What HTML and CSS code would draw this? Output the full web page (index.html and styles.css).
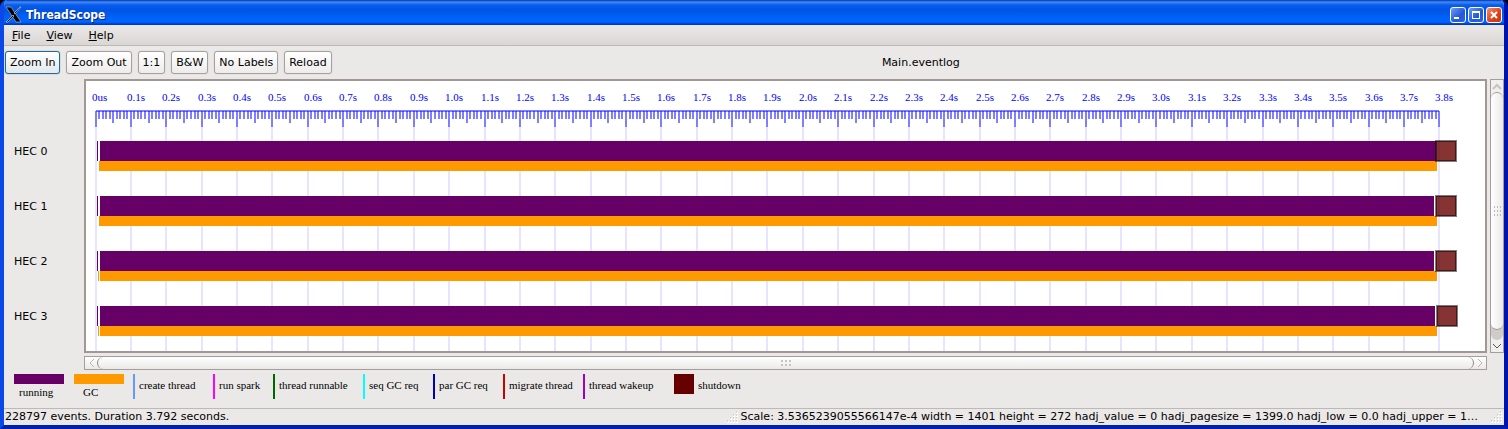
FILE: index.html
```html
<!DOCTYPE html>
<html lang="en">
<head>
<meta charset="utf-8">
<title>ThreadScope</title>
<link rel="stylesheet" href="styles.css">
</head>
<body>
<div class="window">
  <header class="titlebar">
    <svg class="logo" width="18" height="18" viewBox="0 0 18 18" aria-hidden="true">
      <path d="M1 1h5l10 15h-5z" fill="#000" stroke="#9db4cc" stroke-width=".7"/>
      <path d="M15 1h1L10 8 9 7zM8 9l1 1-6 6H1z" fill="#000" stroke="#b8c8d8" stroke-width=".7"/>
    </svg>
    <h1 class="title">ThreadScope</h1>
    <div class="controls">
      <button class="control" aria-label="Minimize"><svg width="14" height="14"><path d="M3 9h5v2H3z" fill="#fff"/></svg></button>
      <button class="control" aria-label="Maximize"><svg width="14" height="14"><path d="M3 3h8v8H3zM4 5v5h6V5z" fill="#fff" fill-rule="evenodd"/></svg></button>
      <button class="control control-close" aria-label="Close"><svg width="14" height="14"><path d="M4 4l6 6M10 4l-6 6" stroke="#fff" stroke-width="2"/></svg></button>
    </div>
  </header>

  <nav class="menubar">
    <button class="menu"><u>F</u>ile</button>
    <button class="menu"><u>V</u>iew</button>
    <button class="menu"><u>H</u>elp</button>
  </nav>

  <div class="toolbar">
    <button class="tool tool-focus">Zoom In</button>
    <button class="tool">Zoom Out</button>
    <button class="tool">1:1</button>
    <button class="tool">B&amp;W</button>
    <button class="tool">No Labels</button>
    <button class="tool">Reload</button>
    <span class="filename">Main.eventlog</span>
  </div>

  <main class="workspace">
    <div class="hecs">
      <span class="hec">HEC 0</span>
      <span class="hec">HEC 1</span>
      <span class="hec">HEC 2</span>
      <span class="hec">HEC 3</span>
    </div>
    <div class="viewport"><svg class="chart" id="chart" role="img" aria-label="Thread activity timeline"></svg></div>
    <div class="vscroll">
      <svg class="arrow" width="12" height="12"><path d="M2 9l4-4 4 4" fill="none" stroke="#c8c3bf" stroke-width="2"/></svg>
      <div class="trough-v"><div class="thumb-v"><svg width="8" height="12"><path d="M1 2h1m2 0h1m2 0h1M1 6h1m2 0h1m2 0h1M1 10h1m2 0h1m2 0h1" stroke="#bcb8b4" stroke-width="2"/></svg></div></div>
      <svg class="arrow" width="12" height="12"><path d="M2 4l4 4 4-4" fill="none" stroke="#555"/></svg>
    </div>
    <div class="hscroll">
      <svg class="arrow" width="12" height="12"><path d="M9 2L5 6l4 4" fill="none" stroke="#bbb5b0"/></svg>
      <div class="thumb-h"><svg width="12" height="8"><path d="M1 2h2m2 0h2m2 0h2M1 6h2m2 0h2m2 0h2" stroke="#c8c4c0" stroke-width="2"/></svg></div>
      <svg class="arrow" width="12" height="12"><path d="M4 2l4 4-4 4" fill="none" stroke="#bbb5b0"/></svg>
    </div>
  </main>

  <section class="legend">
    <div class="key key-block running"><i class="swatch"></i><span>running</span></div>
    <div class="key key-block gc"><i class="swatch"></i><span>GC</span></div>
    <div class="key create"><i class="mark"></i>create thread</div>
    <div class="key spark"><i class="mark"></i>run spark</div>
    <div class="key runnable"><i class="mark"></i>thread runnable</div>
    <div class="key seq"><i class="mark"></i>seq GC req</div>
    <div class="key par"><i class="mark"></i>par GC req</div>
    <div class="key migrate"><i class="mark"></i>migrate thread</div>
    <div class="key wakeup"><i class="mark"></i>thread wakeup</div>
    <div class="key shutdown"><i class="square"></i>shutdown</div>
  </section>

  <footer class="status">
    <span class="status-left">228797 events. Duration 3.792 seconds.</span>
    <svg class="grip" width="12" height="12"><path d="M9 2h2M6 5h2m1 0h2M3 8h2m1 0h2m1 0h2M0 11h2m1 0h2m1 0h2m1 0h2" stroke="#fff" stroke-width="2"/><path d="M9 1h1M6 4h1m2 0h1M3 7h1m2 0h1m2 0h1M0 10h1m2 0h1m2 0h1m2 0h1" stroke="#b5b0ac"/></svg>
    <span class="status-right">Scale: 3.5365239055566147e-4 width = 1401 height = 272 hadj_value = 0 hadj_pagesize = 1399.0 hadj_low = 0.0 hadj_upper = 1…</span>
    <svg class="grip" width="12" height="12"><path d="M9 2h2M6 5h2m1 0h2M3 8h2m1 0h2m1 0h2M0 11h2m1 0h2m1 0h2m1 0h2" stroke="#fff" stroke-width="2"/><path d="M9 1h1M6 4h1m2 0h1M3 7h1m2 0h1m2 0h1M0 10h1m2 0h1m2 0h1m2 0h1" stroke="#b5b0ac"/></svg>
  </footer>
</div>
<script src="chart.js"></script>
</body>
</html>
```
FILE: styles.css
```css
* { box-sizing: border-box; }
body { margin: 0; background: #000; }
button { font: inherit; color: inherit; margin: 0; }
.window {
  display: flex;
  flex-direction: column;
  min-height: 100vh;
  border: 4px solid;
  border-color: #0a48e8 #0012b0 #0020b0 #0a48e8;
  border-top: 0;
  border-radius: 7px 7px 0 0;
  background: #ebe9e8;
  color: #000;
  font: 11px/14px "DejaVu Sans", sans-serif;
  overflow: hidden;
}
.titlebar {
  display: flex;
  align-items: center;
  gap: 3px;
  height: 25px;
  margin: 0 -4px;
  padding: 4px 6px 0 5px;
  background: linear-gradient(#0831a8 0, #3c8cf8 2px, #0a5cec 5px, #0054e3 10px, #0062fa 18px, #0066ff 22px, #003dd0 24px, #0036b8 25px);
}
.title {
  flex: 1;
  margin: 0;
  color: #fff;
  font: bold 12px/16px "DejaVu Sans Condensed", "DejaVu Sans", sans-serif;
  text-shadow: 1px 1px 0 #06247a;
}
.controls { display: flex; gap: 2px; }
.control {
  display: flex;
  align-items: center;
  justify-content: center;
  width: 16px;
  height: 16px;
  padding: 0;
  border: 1px solid #fff;
  border-radius: 3px;
  background: linear-gradient(135deg, #6f9cf5, #2458d8 60%, #2f66e8);
}
.control-close { background: linear-gradient(135deg, #f09070, #dc4018 60%, #c83808); }
.menubar {
  display: flex;
  gap: 16px;
  height: 21px;
  padding: 1px 8px 0;
  border-bottom: 1px solid #bdb9b6;
  background: linear-gradient(#ebe9e8, #dad6d4);
}
.menu { padding: 0; border: 0; background: none; }
.toolbar {
  display: flex;
  align-items: center;
  gap: 6px;
  height: 33px;
  padding-left: 1px;
}
.tool {
  height: 23px;
  padding: 0 4px;
  border: 1px solid #a5a19e;
  border-radius: 3px;
  background: linear-gradient(#fff, #eeeceb);
  box-shadow: 0 0 1px #a5a19e;
  white-space: nowrap;
}
.tool-focus { border-color: #1f6a96; box-shadow: 0 0 1px #1f6a96; background: linear-gradient(#fff, #e2e8ec); }
.filename { flex: 1; text-align: center; }
.workspace {
  display: grid;
  grid-template-columns: 80px minmax(0, 1fr) 14px;
  grid-template-rows: auto 14px;
  row-gap: 3px;
}
.hecs { display: flex; flex-direction: column; gap: 41px; padding: 66px 10px 0; }
.viewport { border: 2px solid #a39795; margin-right: 3px; background: #fff; overflow: hidden; }
.chart { display: block; width: 100%; height: 270px; }
.tick { fill: #00f; fill-opacity: .5; }
.grid { fill: #e5e5ff; }
.time { fill: #00f; font: 11px "Liberation Serif", serif; }
.run { fill: #606; }
.collect { fill: #f90; }
.gap { fill: #fff; }
.end { fill: #600; fill-opacity: .8; stroke: #000; stroke-opacity: .5; stroke-width: 2; }
.vscroll {
  display: flex;
  flex-direction: column;
  align-items: center;
  border: 1px solid #a39e9b;
  background: #f1efee;
}
.trough-v { flex: 1; width: 100%; padding-bottom: 10px; background: #cfcbc9; border-radius: 7px; }
.thumb-v {
  display: flex;
  align-items: center;
  justify-content: center;
  height: 100%;
  border: 1px solid #a39e9b;
  border-width: 1px 0;
  border-radius: 6px;
  background: linear-gradient(90deg, #fff, #ebe9e8);
}
.hscroll {
  grid-column: 2;
  display: flex;
  align-items: center;
  margin-right: 3px;
  border: 1px solid #a39e9b;
  background: linear-gradient(#fff, #ebe9e8);
}
.thumb-h {
  flex: 1;
  display: flex;
  align-items: center;
  justify-content: center;
  height: 12px;
  border: 1px solid #8f8a87;
  border-width: 0 1px;
  border-radius: 6px;
  background: linear-gradient(#fff, #ebe9e8);
}
.legend {
  display: flex;
  flex-wrap: wrap;
  height: 38px;
  padding: 4px 10px 0;
  font: 11px/14px "Liberation Serif", serif;
}
.key { display: flex; gap: 4px; line-height: 22px; width: 90px; white-space: nowrap; }
.key-block { flex-direction: column; gap: 1px; width: 60px; line-height: 14px; }
.swatch { width: 50px; height: 10px; }
.mark { width: 2px; height: 25px; }
.square { width: 20px; height: 20px; }
.running span { padding-left: 5px; }
.running i { background: #606; }
.gc { margin-right: -1px; }
.gc span { padding-left: 9px; }
.gc i { background: #f90; }
.create { width: 80px; }
.create i { background: #69f; }
.spark { width: 60px; }
.spark i { background: #f0f; }
.runnable i { background: #060; }
.seq, .par { width: 70px; }
.seq i { background: #0ff; }
.par i { background: #00b; }
.migrate { width: 80px; }
.migrate i { background: #c00; }
.wakeup { width: 91px; }
.wakeup i { background: #90c; }
.shutdown i { background: #600; }
.status {
  display: flex;
  align-items: center;
  height: 17px;
  padding: 0 1px;
  border-top: 1px solid #bdb9b6;
}
.status-left { flex: 1; }
.status-right { margin: 0 13px 0 2px; }
```
FILE: chart.js
```js
const NS = "http://www.w3.org/2000/svg";
const chart = document.getElementById("chart");
const ORIGIN = 10;
const SCALE = 353.65;

function rect(cls, x, y, width, height) {
  const r = document.createElementNS(NS, "rect");
  r.setAttribute("class", cls);
  Object.entries({ x, y, width, height }).forEach(([k, v]) => r.setAttribute(k, v));
  chart.appendChild(r);
}

const xAt = hundredths => ORIGIN + Math.floor(hundredths * SCALE / 100);

for (let t = 0; t <= 380; t += 10) rect("grid", xAt(t) - 1, 46, 2, 224);
rect("tick", ORIGIN, 29, xAt(380) - ORIGIN, 2);
for (let t = 0; t <= 380; t++) {
  const height = t % 10 === 0 ? 16 : t % 5 === 0 ? 12 : 8;
  rect("tick", xAt(t) - 1, 30, 2, height);
}
for (let t = 0; t <= 38; t++) {
  const label = document.createElementNS(NS, "text");
  label.setAttribute("class", "time");
  label.setAttribute("x", xAt(t * 10) - 4);
  label.setAttribute("y", 20);
  label.textContent = t ? (t / 10).toFixed(1) + "s" : "0us";
  chart.appendChild(label);
}

[
  { end: 1350, stop: 1351, gc: 13 },
  { end: 1348, stop: 1351, gc: 13 },
  { end: 1348, stop: 1351, gc: 14 },
  { end: 1349, stop: 1352, gc: 14 }
].forEach((row, i) => {
  const y = 60 + i * 55;
  rect("gap", 11, y, 1341, 20);
  rect("run", 11, y, 1, 20);
  rect("run", 14, y, row.end - 14, 20);
  rect("collect", row.gc, y + 20, 1351 - row.gc, 10);
  if (row.gc === 14) rect("collect", 12, y + 20, 1, 10);
  rect("end", row.stop - 1, y, 20, 20);
});
```
